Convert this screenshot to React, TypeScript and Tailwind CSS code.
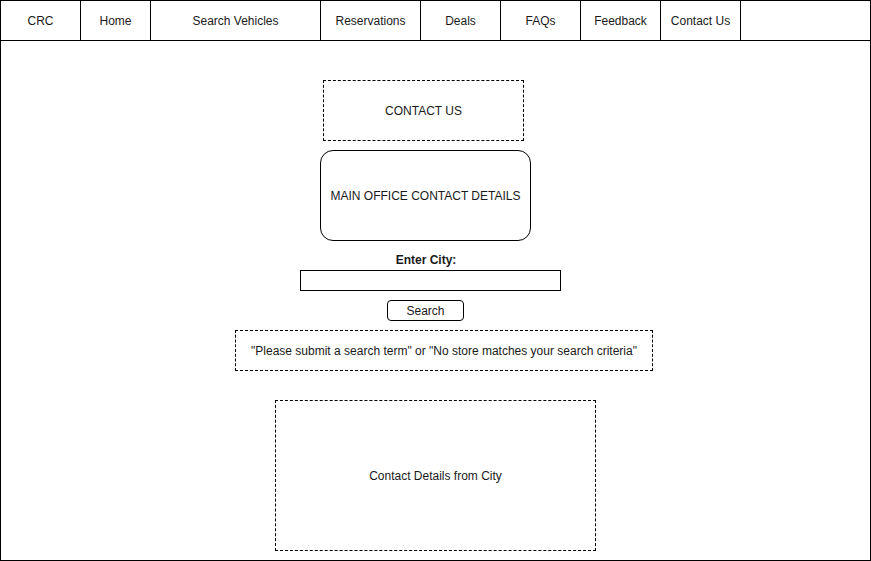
const navItems = [
  { label: "CRC", width: "w-[80px]" },
  { label: "Home", width: "w-[70px]" },
  { label: "Search Vehicles", width: "w-[170px]" },
  { label: "Reservations", width: "w-[100px]" },
  { label: "Deals", width: "w-[80px]" },
  { label: "FAQs", width: "w-[80px]" },
  { label: "Feedback", width: "w-[80px]" },
  { label: "Contact Us", width: "w-[80px]" },
];

export default function App() {
  return (
    <div className="h-[561px] w-[871px] bg-white font-['Liberation_Sans',Arial,sans-serif] text-[12px] text-[#1a1a1a]">
      <div className="flex h-full w-full flex-col border border-black">
        <nav className="flex h-[40px] shrink-0 border-b border-black">
          {navItems.map((item) => (
            <div
              key={item.label}
              className={`${item.width} flex items-center justify-center border-r border-black`}
            >
              {item.label}
            </div>
          ))}
        </nav>

        <main className="flex flex-col items-start">
          <div className="ml-[322px] mt-[39px] flex h-[61px] w-[201px] items-center justify-center border border-dashed border-black">
            CONTACT US
          </div>

          <div className="ml-[319px] mt-[9px] flex h-[91px] w-[211px] items-center justify-center rounded-[13px] border border-black">
            MAIN OFFICE CONTACT DETAILS
          </div>

          <label
            htmlFor="city"
            className="ml-[340px] mt-[9px] flex h-[20px] w-[170px] items-center justify-center font-bold"
          >
            Enter City:
          </label>

          <input
            id="city"
            type="text"
            className="ml-[299px] h-[21px] w-[261px] border border-black bg-white px-1 outline-none"
          />

          <button className="ml-[386px] mt-[9px] flex h-[21px] w-[77px] items-center justify-center rounded-[4px] border border-black bg-white">
            Search
          </button>

          <div className="ml-[234px] mt-[9px] flex h-[41px] w-[418px] items-center justify-center border border-dashed border-black">
            "Please submit a search term" or "No store matches your search criteria"
          </div>

          <div className="ml-[274px] mt-[29px] flex h-[151px] w-[321px] items-center justify-center border border-dashed border-black">
            Contact Details from City
          </div>
        </main>
      </div>
    </div>
  );
}
